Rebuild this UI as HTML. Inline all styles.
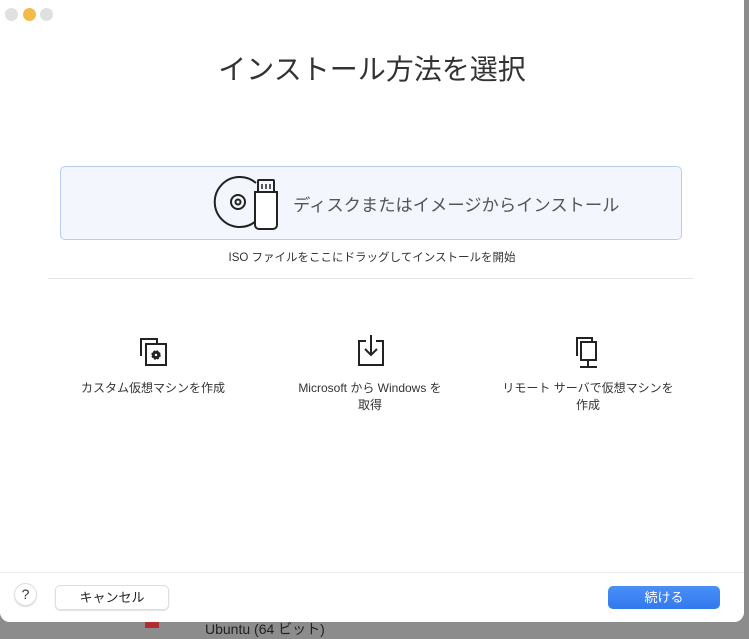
<!DOCTYPE html>
<html><head><meta charset="utf-8"><style>
body{margin:0;width:749px;height:628px;background:#8c8c8c;position:relative;overflow:hidden;font-family:"Liberation Sans","Noto Sans CJK JP",sans-serif;}
.win{position:absolute;left:0;top:0;width:744px;height:622px;background:#fff;border-radius:0 0 10px 10px;overflow:hidden;}
.dot{position:absolute;top:8px;width:13px;height:13px;border-radius:50%;background:#e0e0e0;}
.t{position:absolute;left:0;right:0;text-align:center;color:#333;}
.box{position:absolute;left:60px;top:166px;width:620px;height:72px;background:#f3f6fd;border:1px solid #b9cdf0;border-radius:5px;}
.lbl{position:absolute;width:200px;text-align:center;font-size:12px;color:#333;line-height:17px;}
.footer{position:absolute;left:0;top:572px;width:744px;height:50px;background:#fff;border-top:1px solid #ececec;}
.btn{position:absolute;border-radius:5px;font-size:13px;text-align:center;line-height:23px;}
</style></head><body>
<div style="position:absolute;left:145px;top:614px;width:14px;height:14px;background:#b03030"></div>
<div style="position:absolute;left:205px;top:619px;font-size:14px;color:#222">Ubuntu (64 ビット)</div>
<div class="win">
<div class="dot" style="left:5px"></div>
<div class="dot" style="left:23px;background:#f1bc48"></div>
<div class="dot" style="left:40px"></div>
<div class="t" style="top:48px;font-size:28px;color:#333;">インストール方法を選択</div>
<div class="box"></div>
<svg style="position:absolute;left:208px;top:176px" width="74" height="56" viewBox="0 0 74 56" fill="none" stroke="#222" stroke-width="2">
<path d="M48 7 A25 25 0 1 0 48 45"/>
<circle cx="30" cy="26" r="7"/><circle cx="30" cy="26" r="2.5"/>
<rect x="50" y="4" width="16" height="12" rx="1"/>
<path d="M54 8v5M58 8v5M62 8v5" stroke-width="1.5"/>
<path d="M47 16h22v33a4 4 0 0 1-4 4h-14a4 4 0 0 1-4-4z" fill="#fff"/>
</svg>
<div style="position:absolute;left:293px;top:191px;font-size:17.3px;color:#555;">ディスクまたはイメージからインストール</div>
<div class="t" style="top:249px;font-size:11.5px;">ISO ファイルをここにドラッグしてインストールを開始</div>
<div style="position:absolute;left:48px;top:278px;width:645px;height:1px;background:#e6e6e6"></div>
<svg style="position:absolute;left:137px;top:336px" width="34" height="34" viewBox="0 0 34 34" fill="none" stroke="#222" stroke-width="2">
<path d="M4 20V3h16v5"/><rect x="9" y="8" width="20" height="21"/>
<circle cx="19" cy="19" r="4" fill="#222" stroke-width="1.5" stroke-dasharray="2 1.2"/><circle cx="19" cy="19" r="1.2" fill="#fff" stroke="none"/>
</svg>
<svg style="position:absolute;left:355px;top:333px" width="32" height="36" viewBox="0 0 32 36" fill="none" stroke="#222" stroke-width="2">
<path d="M11 8H4v24h24V8h-7"/><path d="M16 2v20M10 16l6 6 6-6"/>
</svg>
<svg style="position:absolute;left:572px;top:335px" width="32" height="36" viewBox="0 0 32 36" fill="none" stroke="#222" stroke-width="2">
<path d="M5 21V3h15v4"/><rect x="9" y="7" width="15" height="18"/><path d="M16 25v6M8 32h17"/>
</svg>
<div class="lbl" style="left:53px;top:380px;">カスタム仮想マシンを作成</div>
<div class="lbl" style="left:270px;top:380px;">Microsoft から Windows を<br>取得</div>
<div class="lbl" style="left:488px;top:380px;">リモート サーバで仮想マシンを<br>作成</div>
<div class="footer">
<div style="position:absolute;left:14px;top:10px;width:21px;height:21px;border-radius:50%;border:1px solid #ddd;box-shadow:0 1px 1px rgba(0,0,0,.15);text-align:center;line-height:21px;font-size:14px;color:#333">?</div>
<div class="btn" style="left:55px;top:12px;width:112px;height:23px;border:1px solid #ddd;box-shadow:0 1px 1px rgba(0,0,0,.12);color:#222">キャンセル</div>
<div class="btn" style="left:608px;top:13px;width:112px;height:23px;background:linear-gradient(#4a90f7,#3278f0);color:#fff">続ける</div>
</div>
</div>
</body></html>
